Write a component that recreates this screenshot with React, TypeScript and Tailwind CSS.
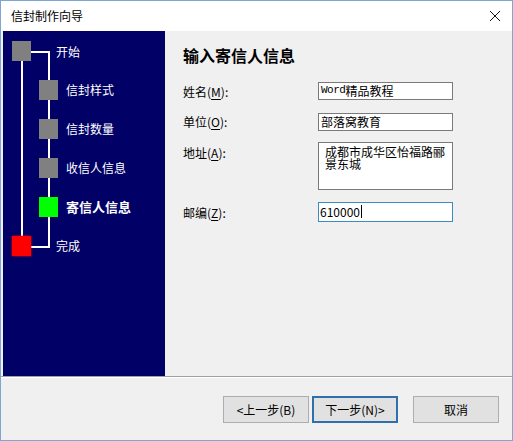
import React from 'react';

const CJK = { fontFamily: '"Noto Sans CJK SC", "Noto Sans", sans-serif' };

const STEPS = [
  { label: '信封样式', top: 49, color: 'bg-[#808080]' },
  { label: '信封数量', top: 88, color: 'bg-[#808080]' },
  { label: '收信人信息', top: 127, color: 'bg-[#808080]' },
  { label: '寄信人信息', top: 166, color: 'bg-[#00ff00]', bold: true },
];

function Hot({ text, k }: { text: string; k: string }) {
  return (
    <span>
      {text}(<span className="underline underline-offset-2">{k}</span>):
    </span>
  );
}

function StepTree() {
  // diagram: squares + connector lines inside the navy panel (panel origin = page x 3, y 31)
  return (
    <div className="relative h-full w-full text-[12px] text-white" style={CJK}>
      {/* lines */}
      <div className="absolute left-[18px] top-[30px] h-[176px] w-[2px] bg-white" />
      <div className="absolute left-[27px] top-[20px] h-[2px] w-[20px] bg-white" />
      <div className="absolute left-[45px] top-[20px] h-[197px] w-[2px] bg-white" />
      <div className="absolute left-[27px] top-[215px] h-[2px] w-[20px] bg-white" />

      <div className="absolute left-[9px] top-[10px] h-[20px] w-[19px] bg-[#808080]" />
      <div className="absolute left-[53px] top-[12px] leading-[18px]">开始</div>

      {STEPS.map((s) => (
        <React.Fragment key={s.label}>
          <div className={`absolute left-[36px] h-[20px] w-[19px] ${s.color}`} style={{ top: s.top }} />
          <div
            className={`absolute left-[63px] leading-[18px] ${s.bold ? 'font-bold text-[13px]' : ''}`}
            style={{ top: s.top + 1 }}
          >
            {s.label}
          </div>
        </React.Fragment>
      ))}

      <div className="absolute left-[9px] top-[205px] h-[20px] w-[19px] bg-[#ff0000] shadow-[0_0_2px_#ff0000]" />
      <div className="absolute left-[53px] top-[206px] leading-[18px]">完成</div>
    </div>
  );
}

export default function App() {
  return (
    <div
      className="flex h-[441px] w-[513px] flex-col border border-[#7fa6d2] bg-[#f0f0f0] text-[12px] text-black"
      style={CJK}
    >
      {/* title bar */}
      <div className="flex h-[30px] shrink-0 items-center justify-between bg-white pl-[10px] pr-[11px]">
        <span className="text-[12px]">信封制作向导</span>
        <svg width="12" height="12" viewBox="0 0 12 12">
          <path d="M1 1 L11 11 M11 1 L1 11" stroke="#111" strokeWidth="1" fill="none" />
        </svg>
      </div>

      {/* body */}
      <div className="flex h-[345px] shrink-0 pl-[2px]">
        <div className="h-full w-[162px] bg-[#000066]">
          <StepTree />
        </div>

        <div className="flex flex-1 flex-col pl-[18px] pt-[14px]">
          <div className="text-[16px] font-bold leading-[20px]">输入寄信人信息</div>

          <div className="mt-[15px] flex items-center">
            <div className="mt-[3px] w-[135px]"><Hot text="姓名" k="M" /></div>
            <div className="flex h-[18px] w-[135px] items-center border border-[#7a7a7a] bg-white px-[2px] leading-none">
              <span style={{ fontFamily: '"Liberation Mono", monospace' }} className="text-[11px] tracking-[-0.5px]">Word</span>
              <span>精品教程</span>
            </div>
          </div>

          <div className="mt-[11px] flex items-center">
            <div className="mt-[1px] w-[135px]"><Hot text="单位" k="O" /></div>
            <div className="flex h-[18px] w-[135px] items-center border border-[#7a7a7a] bg-white px-[2px] leading-none">
              部落窝教育
            </div>
          </div>

          <div className="mt-[11px] flex items-start">
            <div className="mt-[2px] w-[135px]"><Hot text="地址" k="A" /></div>
            <div className="h-[48px] w-[135px] border border-[#7a7a7a] bg-white pl-[6px] pr-[2px] pt-[3px] leading-[12px] break-all">
              成都市成华区怡福路郦景东城
            </div>
          </div>

          <div className="mt-[11px] flex items-center">
            <div className="mt-[3px] w-[135px]"><Hot text="邮编" k="Z" /></div>
            <div className="flex h-[20px] w-[135px] items-center border border-[#3c8cbf] bg-white px-[1px] leading-none">
              610000<span className="ml-[1px] inline-block h-[13px] w-[1px] bg-black" />
            </div>
          </div>
        </div>
      </div>

      {/* separator */}
      <div className="h-[1px] shrink-0 bg-[#a0a0a0]" />
      <div className="h-[1px] shrink-0 bg-white" />

      {/* footer buttons */}
      <div className="flex flex-1 items-start pl-[222px] pt-[18px]">
        <button className="h-[27px] w-[86px] border border-[#adadad] bg-[#e1e1e1] text-[12px]">
          &lt;上一步(B)
        </button>
        <button className="ml-[3px] h-[27px] w-[86px] border-2 border-[#2f6fae] bg-[#e1e1e1] text-[12px]">
          下一步(N)&gt;
        </button>
        <button className="ml-[15px] h-[27px] w-[86px] border border-[#adadad] bg-[#e1e1e1] text-[12px]">
          取消
        </button>
      </div>
    </div>
  );
}
